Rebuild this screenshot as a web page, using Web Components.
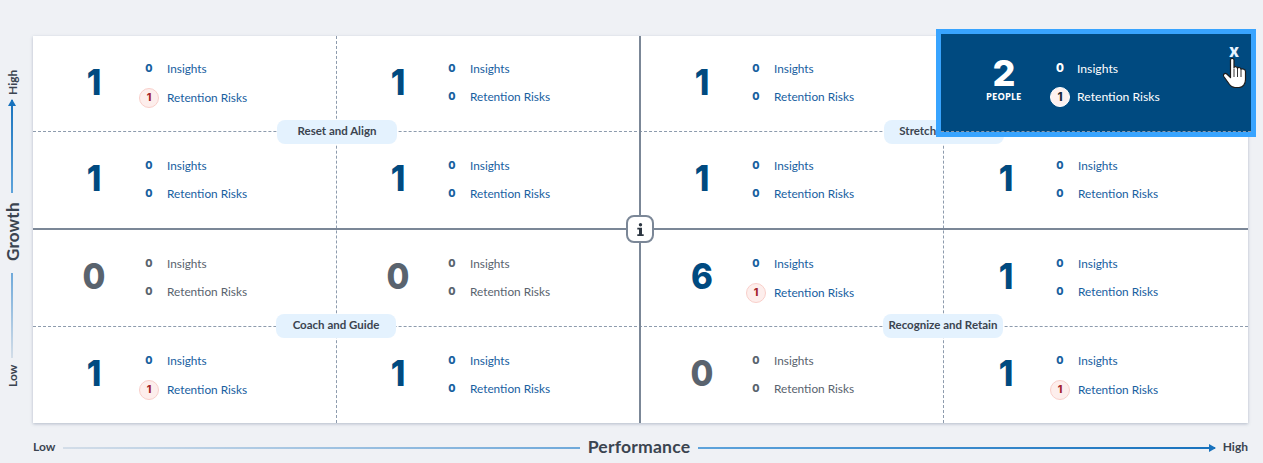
<!DOCTYPE html>
<html>
<head>
<meta charset="utf-8">
<style>
  html, body { margin: 0; background: #eff1f5; }
  body { font-family: Lato, "Liberation Sans", sans-serif; }
</style>
</head>
<body>
<talent-matrix>
  <axis-line slot="growth" vertical start="Low" end="High" label="Growth"></axis-line>
  <axis-line slot="performance" start="Low" end="High" label="Performance"></axis-line>

  <box-cell count="1" risks="1"></box-cell>
  <box-cell count="1"></box-cell>
  <box-cell count="1"></box-cell>
  <box-cell count="2" risks="1" active></box-cell>

  <box-cell count="1"></box-cell>
  <box-cell count="1"></box-cell>
  <box-cell count="1"></box-cell>
  <box-cell count="1"></box-cell>

  <box-cell count="0" grey></box-cell>
  <box-cell count="0" grey></box-cell>
  <box-cell count="6" risks="1"></box-cell>
  <box-cell count="1"></box-cell>

  <box-cell count="1" risks="1"></box-cell>
  <box-cell count="1"></box-cell>
  <box-cell count="0" grey></box-cell>
  <box-cell count="1" risks="1"></box-cell>

  <quadrant-pill slot="over" style="left:244px;top:84px;width:120px">Reset and Align</quadrant-pill>
  <quadrant-pill slot="over" style="left:851px;top:84px;width:120px">Stretch and Grow</quadrant-pill>
  <quadrant-pill slot="over" style="left:243px;top:278px;width:120px">Coach and Guide</quadrant-pill>
  <quadrant-pill slot="over" style="left:850px;top:278px;width:120px">Recognize and Retain</quadrant-pill>
</talent-matrix>

<script>
const DARK = '#004a80';
const GREY = '#59636e';

class StatRow extends HTMLElement {
    static get observedAttributes() {
        return ['value', 'label'];
    }

    constructor() {
        super();
        this.attachShadow({mode: 'open'});
        this.shadowRoot.innerHTML = `
<style>
  :host { display: flex; align-items: center; min-height: 18px; font-size: 11.8px; color: #17609f; }
  :host([risk]) { min-height: 21px; }
  .num {
    flex: none; width: 20px; height: 18px; margin-left: -4px; margin-right: 8px; box-sizing: border-box;
    display: flex; align-items: center; justify-content: center;
    font: 800 10.5px Inter, sans-serif;
  }
  :host([risk]) .num {
    width: 20px; height: 20px; border-radius: 50%;
    background: #fdeeec; border: 1px solid #f9cfca; color: #a3262b;
  }
  :host([mode="grey"]) { color: ${GREY}; }
  :host([mode="dark"]) { color: #fff; font-size: 12.2px; }
  :host([mode="dark"]) .num { color: #fff; margin-right: 7px; font-size: 11.5px; }
  :host([mode="dark"][risk]) .num { background: #fdf1ef; color: #1d2a36; border-color: #fff; }
  .label { white-space: nowrap; }
</style>
<div class="num"></div><div class="label"></div>`;
    }

    connectedCallback() {
        this.render();
    }

    attributeChangedCallback() {
        this.render();
    }

    render() {
        this.shadowRoot.querySelector('.num').textContent = this.getAttribute('value');
        this.shadowRoot.querySelector('.label').textContent = this.getAttribute('label');
    }
}

class BoxCell extends HTMLElement {
    constructor() {
        super();
        this.attachShadow({mode: 'open'});
    }

    connectedCallback() {
        const count = this.getAttribute('count');
        const risks = this.getAttribute('risks') || '0';
        const insights = this.getAttribute('insights') || '0';
        const active = this.hasAttribute('active');
        const mode = this.hasAttribute('grey') ? 'mode="grey"' : '';
        this.shadowRoot.innerHTML = `
<style>
  :host { display: flex; align-items: center; position: relative; min-width: 0; color: ${DARK}; }
  :host([grey]) { color: ${GREY}; }
  .count {
    flex: none; width: 122px; text-align: center; margin-left: var(--count-x, 0px);
    font-family: Inter, sans-serif; font-weight: 800; font-size: 36px; line-height: 1;
    margin-top: -4px; transform: scaleX(.92);
  }
  .stats {
    display: flex; flex-direction: column; gap: 10px; align-self: flex-start;
    padding-top: var(--stats-top, 25px);
    margin-left: calc(-12px - var(--count-x, 0px) + var(--stats-x, 0px));
  }
  .pop {
    position: absolute; z-index: 5; left: -7px; top: -7px; right: -8px; bottom: -6px;
    background: #004a80; border: 5px solid #38a4ff; display: flex; align-items: center;
    box-sizing: border-box; color: #fff;
  }
  .pop .who { flex: none; width: 126px; text-align: center; margin-top: -9px; }
  .pop .count { width: auto; color: #fff; margin: 0; transform: none; }
  .pop .people { font-size: 8.500px; font-weight: 800; letter-spacing: .6px; margin-top: 1px; }
  .pop .stats { margin-left: -13px; align-self: center; gap: 9px; padding-top: 0; }
  .close {
    position: absolute; right: 12px; top: 9px; font: 800 17px/1 Inter, sans-serif; color: #e8f3ff;
  }
  .pop-line { position: absolute; left: 0; right: 0; bottom: 0; border-bottom: 1px dashed #8d99a8; }
  .hand { position: absolute; right: 4px; top: 24px; width: 24px; height: 30px; }
</style>
${active ? `
<div class="pop">
  <div class="who"><div class="count">${count}</div><div class="people">PEOPLE</div></div>
  <div class="stats">
    <stat-row mode="dark" value="${insights}" label="Insights"></stat-row>
    <stat-row mode="dark" risk value="${risks}" label="Retention Risks"></stat-row>
  </div>
  <div class="close">x</div>
  <div class="pop-line"></div>
  <svg class="hand" viewBox="0 0 24 30">
    <path d="M7.500 2C7.500 0 11 0 11 2V10C11 8 14.500 8 14.500 10.500C14.500 9 18 9 18 11.500C18 10.500 22.500 10.500 22.500 13.500V21.500C22.500 26 20 29.500 16 29.500H12C9.500 29.500 8 28.500 6.500 26.500L.8 18.500C-.5 16.500 1.800 14.500 3.800 16L7.500 19.500Z" fill="#fff" stroke="#1c1c1c" stroke-width="1.200" stroke-linejoin="round"/>
    <path d="M11 11V19M14.500 11V19M18 12V19" stroke="#1c1c1c" stroke-width=".9" fill="none"/>
  </svg>
</div>` : `
<div class="count">${count}</div>
<div class="stats">
  <stat-row ${mode} value="${insights}" label="Insights"></stat-row>
  <stat-row ${mode} ${risks !== '0' ? 'risk' : ''} value="${risks}" label="Retention Risks"></stat-row>
</div>`}`;
    }
}

class QuadrantPill extends HTMLElement {
    constructor() {
        super();
        this.attachShadow({mode: 'open'});
        this.shadowRoot.innerHTML = `
<style>
  :host {
    position: absolute; z-index: 3; height: 24px; box-sizing: border-box; padding-bottom: 3px;
    display: flex; align-items: center; justify-content: center;
    background: #e4f2fe; border-radius: 8px; white-space: nowrap;
    font-size: 11.5px; font-weight: 700; color: #3b4450;
  }
</style>
<slot></slot>`;
    }
}

class AxisLine extends HTMLElement {
    constructor() {
        super();
        this.attachShadow({mode: 'open'});
    }

    connectedCallback() {
        const start = this.getAttribute('start');
        const end = this.getAttribute('end');
        const label = this.getAttribute('label');
        this.shadowRoot.innerHTML = `
<style>
  :host { display: flex; align-items: center; color: #3b4450; font-weight: 700; font-size: 12px; white-space: nowrap; }
  :host([vertical]) { writing-mode: vertical-rl; transform: rotate(180deg); height: 317px; }
  :host(:not([vertical])) span { padding-bottom: 2px; }
  .name { font-size: 17.600px; margin: 0 8px; letter-spacing: .2px; }
  .a { flex: 1; height: 2px; margin-left: 8px; background: linear-gradient(90deg, #d3dde8, #6fa9da); }
  .b { flex: 1; height: 2px; margin-right: 8px; position: relative; background: linear-gradient(90deg, #5ea3db, #1872bd); }
  .b::after {
    content: ''; position: absolute; right: -1px; top: -3px;
    border-left: 7px solid #1872bd; border-top: 4px solid transparent; border-bottom: 4px solid transparent;
  }
  :host([vertical]) .name { font-size: 17px; margin: 12px 0 9px; }
  :host([vertical]) .a { width: 2px; height: auto; margin: 7px 0 0; background: linear-gradient(180deg, #d3dde8, #6fa9da); }
  :host([vertical]) .b { flex: 0 0 93px; width: 2px; height: auto; margin: 0 0 5px; background: linear-gradient(180deg, #5ea3db, #1872bd); }
  :host([vertical]) .b::after {
    right: -3px; top: auto; bottom: -1px;
    border-top: 7px solid #1872bd; border-bottom: 0;
    border-left: 4px solid transparent; border-right: 4px solid transparent;
  }
</style>
<span>${start}</span><div class="a"></div><span class="name">${label}</span><div class="b"></div><span>${end}</span>`;
    }
}

class TalentMatrix extends HTMLElement {
    constructor() {
        super();
        this.attachShadow({mode: 'open'});
        this.shadowRoot.innerHTML = `
<style>
  :host { display: grid; grid-template-columns: 33px 1215px; grid-template-rows: 387px auto; padding: 36px 0 0; height: 427px; }
  .left { display: flex; align-items: center; justify-content: center; padding-bottom: 3px; padding-right: 8px; }
  .board {
    position: relative; background: #fff; box-shadow: 0 1px 3px rgba(70,90,120,.35);
    display: grid; grid-template-columns: 303px 304px 303px 305px; grid-template-rows: 95px 98px 97px 97px;
  }
  .bottom { grid-column: 2; padding-top: 13px; }
  .v, .h { position: absolute; z-index: 1; }
  .v.main { left: 606px; top: 0; bottom: 0; width: 2px; background: #7b8797; }
  .h.main { top: 192px; left: 0; right: 0; height: 2px; background: #7b8797; }
  .v.dash { top: 0; bottom: 0; border-left: 1px dashed #8d9bad; }
  .h.dash { left: 0; right: 0; border-top: 1px dashed #8d9bad; }
  ::slotted(box-cell) { z-index: 2; }
  ::slotted(box-cell[active]) { z-index: 6; }
  ::slotted(box-cell:nth-of-type(-n+4)) { --stats-top: 23px; }
  ::slotted(box-cell:nth-of-type(4n+2)), ::slotted(box-cell:nth-of-type(4n+3)) { --count-x: 1px; }
  ::slotted(box-cell:nth-of-type(4n)) { --count-x: 2px; --stats-x: 1px; }
  .info {
    position: absolute; z-index: 4; left: 593px; top: 179px; width: 28px; height: 28px; box-sizing: border-box;
    background: #fff; border: 2px solid #7b8797; border-radius: 8px;
    display: flex; align-items: center; justify-content: center;
  }
  .info svg { width: 7px; height: 13px; }
</style>
<div class="left"><slot name="growth"></slot></div>
<div class="board">
  <div class="v dash" style="left:303px"></div>
  <div class="v dash" style="left:910px"></div>
  <div class="h dash" style="top:95px"></div>
  <div class="h dash" style="top:290px"></div>
  <div class="v main"></div>
  <div class="h main"></div>
  <slot></slot>
  <slot name="over"></slot>
  <div class="info">
    <svg viewBox="0 0 7 13"><circle cx="3.500" cy="1.700" r="1.700" fill="#2d3742"/><path d="M.3 4.800H5V11.200H6.700V13H.3V11.200H2V6.600H.3Z" fill="#2d3742"/></svg>
  </div>
</div>
<div class="bottom"><slot name="performance"></slot></div>`;
    }
}

window.customElements.define('stat-row', StatRow);
window.customElements.define('box-cell', BoxCell);
window.customElements.define('quadrant-pill', QuadrantPill);
window.customElements.define('axis-line', AxisLine);
window.customElements.define('talent-matrix', TalentMatrix);
</script>
</body>
</html>
